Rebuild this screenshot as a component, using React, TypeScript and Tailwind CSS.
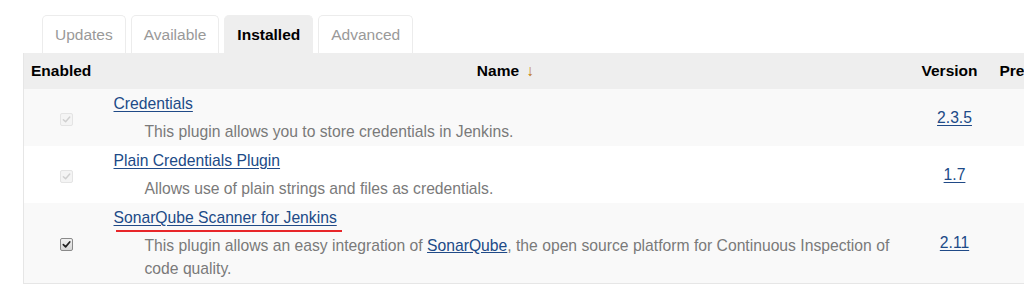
import React from 'react';

interface Plugin {
  name: string;
  version: string;
  enabled: boolean;
  locked: boolean;
  marked?: boolean;
  desc: React.ReactNode;
}

const plugins: Plugin[] = [
  {
    name: 'Credentials',
    version: '2.3.5',
    enabled: true,
    locked: true,
    desc: 'This plugin allows you to store credentials in Jenkins.',
  },
  {
    name: 'Plain Credentials Plugin',
    version: '1.7',
    enabled: true,
    locked: true,
    desc: 'Allows use of plain strings and files as credentials.',
  },
  {
    name: 'SonarQube Scanner for Jenkins',
    version: '2.11',
    enabled: true,
    locked: false,
    marked: true,
    desc: (
      <>
        This plugin allows an easy integration of{' '}
        <a href="#" className="text-[#204a87] underline">SonarQube</a>, the open source platform for
        Continuous Inspection of code quality.
      </>
    ),
  },
];

function Check({ locked }: { locked: boolean }) {
  return (
    <span
      className={
        locked
          ? 'inline-flex w-[13px] h-[13px] items-center justify-center rounded-[2px] border border-[#e4e4e4] bg-[#f4f4f4]'
          : 'inline-flex w-[13px] h-[13px] items-center justify-center rounded-[2px] border border-[#8a8a8a] bg-gradient-to-b from-[#f2f2f2] to-[#d6d6d6]'
      }
    >
      <svg width="9" height="9" viewBox="0 0 10 10">
        <path
          d="M1.5 5.2 L4 7.6 L8.6 2.2"
          fill="none"
          stroke={locked ? '#cfcfcf' : '#222'}
          strokeWidth={locked ? 1.6 : 1.9}
          strokeLinecap="round"
          strokeLinejoin="round"
        />
      </svg>
    </span>
  );
}

const tabs = ['Updates', 'Available', 'Installed', 'Advanced'];

export default function App() {
  return (
    <div className="w-[1024px] h-[301px] overflow-hidden bg-white font-['Liberation_Sans',Arial,sans-serif] text-[15.7px]">
      <div className="pt-[15px] pl-[23px]">
        <div className="flex gap-[5px] pl-[19px]">
          {tabs.map((t) => (
            <div
              key={t}
              className={
                t === 'Installed'
                  ? 'h-[38px] px-[12px] flex items-center rounded-t-[5px] bg-[#eeeeee] border border-b-0 border-[#eeeeee] text-[15.5px] font-bold text-black'
                  : 'h-[38px] px-[12px] flex items-center rounded-t-[5px] border border-b-0 border-[#ececec] text-[15.5px] text-[#999999]'
              }
            >
              {t}
            </div>
          ))}
        </div>

        <table className="w-[1060px] border-collapse border-l border-b border-[#e6e6e6] table-fixed">
          <colgroup>
            <col className="w-[82px]" />
            <col className="w-[800px]" />
            <col className="w-[88px]" />
            <col />
          </colgroup>
          <thead>
            <tr className="h-[36px] bg-[#eeeeee] text-black text-[15.5px]">
              <th className="text-left font-bold pl-[7px]">Enabled</th>
              <th className="text-center font-bold">
                Name <span className="font-normal text-[#c07a10] ml-[3px]">↓</span>
              </th>
              <th className="text-center font-bold">Version</th>
              <th className="text-left font-bold pl-[6px] whitespace-nowrap">Previously installed version</th>
            </tr>
          </thead>
          <tbody>
            {plugins.map((p, i) => (
              <tr key={p.name} className={i === 1 ? 'bg-white' : 'bg-[#f9f9f9]'}>
                <td className="align-middle pl-[36px] pt-[2px]">
                  <Check locked={p.locked} />
                </td>
                <td className="pl-[8px] pr-[6px] pt-[3px] pb-[3px] leading-[23px] align-top">
                  <div className="mb-[5px]">
                    <span className="relative inline-block">
                      <a href="#" className="text-[#204a87] underline underline-offset-[2px]">
                        {p.name}
                      </a>
                      {p.marked && (
                        <span className="absolute left-[2px] right-[-5px] bottom-[-3px] h-[2px] bg-[#e8262a]" />
                      )}
                    </span>
                  </div>
                  <div className="pl-[31px] text-[#7a7a7a]">{p.desc}</div>
                </td>
                <td className="text-center align-middle pl-[10px]">
                  <a href="#" className="text-[#204a87] underline underline-offset-[2px]">
                    {p.version}
                  </a>
                </td>
                <td />
              </tr>
            ))}
          </tbody>
        </table>
      </div>
    </div>
  );
}
